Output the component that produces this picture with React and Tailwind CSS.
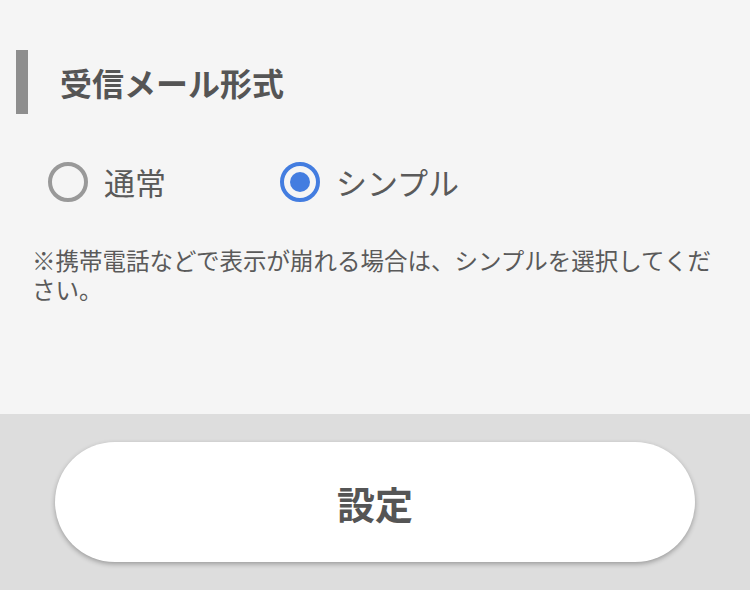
import React, { useState } from "react";

const font = { fontFamily: '"Noto Sans CJK JP", "Noto Sans", sans-serif' };

function Radio({ checked, label, onClick, className = "" }) {
  return (
    <button type="button" onClick={onClick} className={`flex items-center gap-4 ${className}`}>
      {checked ? (
        <span className="flex h-10 w-10 items-center justify-center rounded-full border-4 border-[#437de0]">
          <span className="h-5 w-5 rounded-full bg-[#437de0]" />
        </span>
      ) : (
        <span className="h-10 w-10 rounded-full border-4 border-[#999999]" />
      )}
      <span className="text-[31px] leading-10 text-[#5a5a5a]">{label}</span>
    </button>
  );
}

export default function App() {
  const [format, setFormat] = useState("simple");

  return (
    <div className="flex h-[590px] w-full flex-col bg-[#dddddd]" style={font}>
      {/* Settings panel */}
      <section className="h-[414px] bg-[#f5f5f5] pt-[50px]">
        <div className="ml-4 flex h-16 items-center">
          <div className="h-16 w-3 bg-[#8e8e8e]" />
          <h2 className="ml-8 text-[32px] font-bold text-[#555555]">受信メール形式</h2>
        </div>

        <div className="mt-12 flex items-center pl-12">
          <Radio
            label="通常"
            checked={format === "normal"}
            onClick={() => setFormat("normal")}
            className="w-[232px]"
          />
          <Radio
            label="シンプル"
            checked={format === "simple"}
            onClick={() => setFormat("simple")}
          />
        </div>

        <p className="mt-[44px] px-8 text-[23.5px] leading-[29px] text-[#5a5a5a]">
          ※携帯電話などで表示が崩れる場合は、シンプルを選択してください。
        </p>
      </section>

      {/* Footer button */}
      <div className="flex flex-1 items-center justify-center">
        <button
          type="button"
          className="h-[120px] w-[640px] rounded-full bg-white text-[38px] font-bold text-[#555555] shadow-[0_2px_5px_rgba(0,0,0,0.3)]"
        >
          設定
        </button>
      </div>
    </div>
  );
}
